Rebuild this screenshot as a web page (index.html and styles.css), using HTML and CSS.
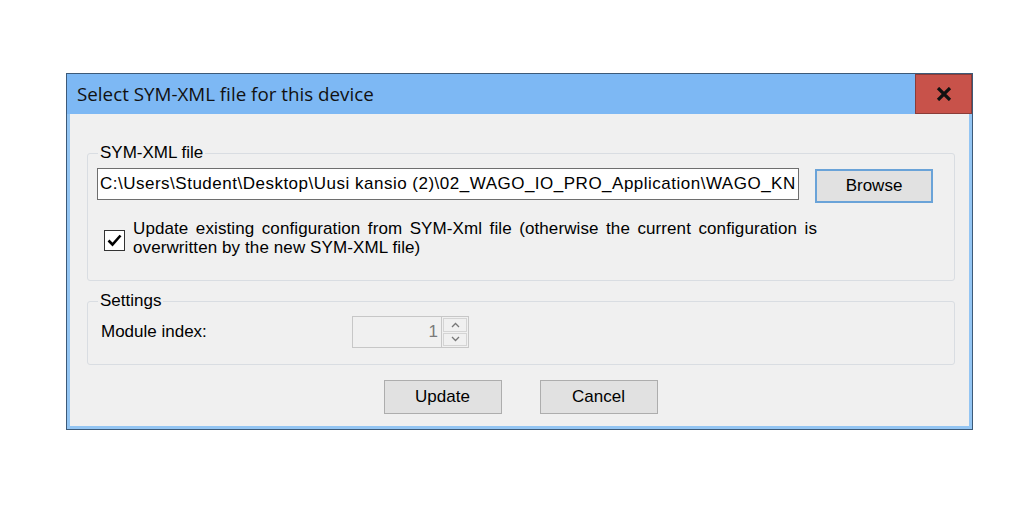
FILE: index.html
```html
<!DOCTYPE html>
<html>
<head>
<meta charset="utf-8">
<link rel="stylesheet" href="styles.css">
</head>
<body>
<div class="page">
  <div class="dialog">
    <div class="titlebar">
      <div class="title">Select SYM-XML file for this device</div>
      <div class="close">
        <svg width="16" height="14" viewBox="0 0 16 14"><path d="M2 1 L14 13 M14 1 L2 13" stroke="#111" stroke-width="3.2" fill="none"/></svg>
      </div>
    </div>
    <div class="content">
      <fieldset class="group">
        <legend>SYM-XML file</legend>
        <div class="group-body body-file">
          <div class="file-row">
            <input class="path" type="text" readonly value="C:\Users\Student\Desktop\Uusi kansio (2)\02_WAGO_IO_PRO_Application\WAGO_KNX_project.xml">
            <div class="btn btn-default">Browse</div>
          </div>
          <div class="check-row">
            <div class="checkbox">
              <svg width="15" height="13" viewBox="0 0 15 13"><path d="M1.5 6.5 L5.5 10.5 L13.5 1.5" stroke="#000" stroke-width="2.6" fill="none"/></svg>
            </div>
            <div class="check-label">
              <span class="line-just">Update existing configuration from SYM-Xml file (otherwise the current configuration is</span>
              <span class="line-last">overwritten by the new SYM-XML file)</span>
            </div>
          </div>
        </div>
      </fieldset>
      <fieldset class="group group-settings">
        <legend>Settings</legend>
        <div class="group-body body-settings">
          <div class="label">Module index:</div>
          <div class="numeric">
            <div class="num-value">1</div>
            <div class="spin">
              <div class="spin-btn"><svg width="9" height="6" viewBox="0 0 9 6"><path d="M1 5 L4.5 1.5 L8 5" stroke="#777" stroke-width="1.3" fill="none"/></svg></div>
              <div class="spin-btn"><svg width="9" height="6" viewBox="0 0 9 6"><path d="M1 1 L4.5 4.5 L8 1" stroke="#777" stroke-width="1.3" fill="none"/></svg></div>
            </div>
          </div>
        </div>
      </fieldset>
      <div class="buttons">
        <div class="btn">Update</div>
        <div class="btn">Cancel</div>
      </div>
    </div>
  </div>
</div>
</body>
</html>
```
FILE: styles.css
```css
html, body {
  margin: 0;
  padding: 0;
  background: #ffffff;
}

.page {
  padding: 73px 0 0 66px;
}

.dialog {
  box-sizing: border-box;
  width: 907px;
  border: 1px solid #3d5a78;
  background: #93c5f3;
  padding: 0 3px 3px 3px;
  display: flex;
  flex-direction: column;
  font-family: "Liberation Sans", Arial, sans-serif;
  font-size: 17px;
  color: #000;
}

.titlebar {
  margin: 0 -3px;
  height: 40px;
  background: #7db8f4;
  display: flex;
  align-items: center;
  justify-content: space-between;
}

.title {
  font-family: "Open Sans", "Noto Sans", sans-serif;
  font-size: 18.8px;
  padding-left: 10px;
  color: #111;
}

.close {
  box-sizing: border-box;
  width: 57px;
  height: 40px;
  background: #c8524a;
  border: 1px solid #8a3c38;
  display: flex;
  align-items: center;
  justify-content: center;
}

.content {
  background: #f0f0f0;
  padding: 30px 14px 12px 17px;
  display: flex;
  flex-direction: column;
}

.group {
  margin: 0;
  padding: 0;
  border: 1px solid #d9dde2;
  border-radius: 3px;
  min-width: 0;
}

.group legend {
  margin-left: 10px;
  padding: 0 2px;
  line-height: 18px;
  font-size: 17px;
}

.body-file {
  padding: 6px 21px 23px 9px;
}

.file-row {
  display: flex;
  align-items: flex-start;
  gap: 16px;
}

.path {
  box-sizing: border-box;
  width: 702px;
  height: 32px;
  border: 1px solid #6e6e6e;
  background: #fff;
  padding: 0 2px;
  margin: 0;
  font-family: "Liberation Sans", Arial, sans-serif;
  font-size: 17px;
  letter-spacing: 0.5px;
  color: #000;
  outline: none;
}

.btn {
  box-sizing: border-box;
  width: 118px;
  height: 34px;
  border: 1px solid #adadad;
  background: #e1e1e1;
  display: flex;
  align-items: center;
  justify-content: center;
  font-size: 17px;
}

.btn-default {
  margin-top: 1px;
  border: 2px solid #6aa3d8;
}

.check-row {
  display: flex;
  align-items: center;
  margin-top: 16px;
  padding-left: 7px;
  gap: 8px;
}

.checkbox {
  box-sizing: border-box;
  width: 21px;
  height: 21px;
  border: 1px solid #333;
  background: #fff;
  display: flex;
  align-items: center;
  justify-content: center;
  margin-top: 5px;
  flex: none;
}

.check-label {
  width: 684px;
  line-height: 19px;
  letter-spacing: 0.1px;
}

.line-just {
  display: block;
  text-align: justify;
  text-align-last: justify;
}

.line-last {
  display: block;
}

.group-settings {
  margin-top: 11px;
}

.body-settings {
  padding: 6px 13px 16px 13px;
  display: flex;
  align-items: center;
}

.label {
  width: 251px;
}

.numeric {
  box-sizing: border-box;
  width: 117px;
  height: 32px;
  border: 1px solid #c7c7c7;
  background: #f0f0f0;
  display: flex;
}

.num-value {
  flex: 1;
  text-align: right;
  padding-right: 3px;
  line-height: 30px;
  color: #7a7a7a;
}

.spin {
  width: 26px;
  display: flex;
  flex-direction: column;
  border-left: 1px solid #c7c7c7;
}

.spin-btn {
  flex: 1;
  display: flex;
  align-items: center;
  justify-content: center;
  border: 1px solid #d4d4d4;
  margin: 1px;
}

.spin-btn + .spin-btn {
  margin-top: 0;
}

.buttons {
  display: flex;
  justify-content: center;
  gap: 38px;
  margin-top: 15px;
  padding-right: 1px;
}
```
